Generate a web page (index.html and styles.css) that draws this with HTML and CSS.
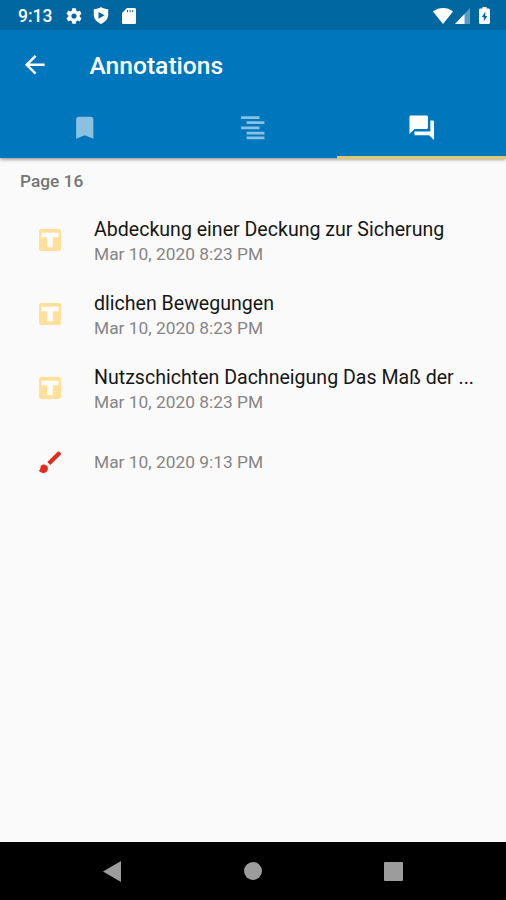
FILE: index.html
```html
<!DOCTYPE html>
<html lang="en">
<head>
<meta charset="utf-8">
<title>Annotations</title>
<link rel="stylesheet" href="styles.css">
</head>
<body>
<div class="screen">
  <header class="header">
    <div class="status">
      <span class="clock">9:13</span>
      <svg class="gear" viewBox="2 2 20 20"><path d="M19.14 12.94c.04-.3.06-.61.06-.94s-.02-.64-.07-.94l2.03-1.58c.18-.14.23-.41.12-.61l-1.92-3.32c-.12-.22-.37-.29-.59-.22l-2.39.96c-.5-.38-1.03-.7-1.62-.94l-.36-2.54c-.04-.24-.24-.41-.48-.41h-3.84c-.24 0-.43.17-.47.41l-.36 2.54c-.59.24-1.13.57-1.62.94l-2.39-.96c-.22-.08-.47 0-.59.22L2.74 8.87c-.12.21-.08.47.12.61l2.03 1.58c-.05.3-.09.63-.09.94s.02.64.07.94l-2.03 1.58c-.18.14-.23.41-.12.61l1.92 3.32c.12.22.37.29.59.22l2.39-.96c.5.38 1.03.7 1.62.94l.36 2.54c.05.24.24.41.48.41h3.84c.24 0 .44-.17.47-.41l.36-2.54c.59-.24 1.13-.56 1.62-.94l2.39.96c.22.08.47 0 .59-.22l1.92-3.32c.12-.22.07-.47-.12-.61zM12 15.200A3.200 3.200 0 1 1 12 8.800a3.200 3.200 0 0 1 0 6.400z"/></svg>
      <svg class="shield" viewBox="0 0 16 17"><path fill-rule="evenodd" d="M8 0C10 1.600 12.500 2 15.200 2.200V8c0 4-3 7-7.200 9C3.800 15 .8 12 .8 8V2.200C3.500 2 6 1.600 8 0zM5.500 4.900v6.800l6-3.400z"/></svg>
      <svg class="card" viewBox="0 0 14 16"><path fill-rule="evenodd" d="M5 0h7.400C13.300 0 14 .7 14 1.600v12.800c0 .9-.7 1.600-1.600 1.600H1.600C.7 16 0 15.300 0 14.400V5zM5 2v2.200h1V2zm2.600 0v2.200h1V2zm2.600 0v2.200h1V2z"/></svg>
      <svg class="wifi" viewBox="0 0 20 16"><path d="M10 16L0 3.400C5.500-1.100 14.500-1.100 20 3.400z"/></svg>
      <svg class="signal" viewBox="0 0 15 16"><path opacity=".35" d="M15 0v16H0z"/><path d="M9.500 5.900V16H0z"/></svg>
      <svg class="battery" viewBox="0 0 11 17"><path fill-rule="evenodd" d="M3.500 0h4v1.600h2c.8 0 1.500.6 1.500 1.400v12.500c0 .8-.7 1.500-1.500 1.500h-8C.7 17 0 16.300 0 15.500V3c0-.8.7-1.400 1.500-1.400h2zM6.300 4.800L2.800 10h2v4.200L8.300 9h-2z"/></svg>
    </div>
    <div class="toolbar">
      <svg class="icon" viewBox="0 0 24 24"><path d="M20 11H7.830l5.590-5.590L12 4l-8 8 8 8 1.410-1.410L7.830 13H20v-2z"/></svg>
      <h1 class="title">Annotations</h1>
    </div>
    <nav class="tabs">
      <div class="tab"><svg class="icon" viewBox="0 0 24 24"><path d="M17 3H7c-1.100 0-2 .9-2 2v16l7-3 7 3V5c0-1.100-.9-2-2-2z"/></svg></div>
      <div class="tab"><svg class="icon" viewBox="0 0 24 24"><path d="M2.500 2.600h15v2.200h-15zM7 6.800h14.500V9H7zM2.500 11h15v2.200h-15zM7 15.200h14.500v2.200H7zM7 19.200h14.500v2.200H7z"/></svg></div>
      <div class="tab active"><svg class="icon" viewBox="0 0 24 24"><path d="M21 6h-2v9H6v2c0 .55.45 1 1 1h11l4 4V7c0-.55-.45-1-1-1zm-4 6V3c0-.55-.45-1-1-1H3c-.55 0-1 .45-1 1v14l4-4h10c.55 0 1-.45 1-1z"/></svg></div>
    </nav>
  </header>
  <main class="list">
    <h2 class="page">Page 16</h2>
    <div class="row">
      <svg class="mark" viewBox="0 0 22 22"><rect width="22" height="22" rx="2"/><path class="letter" d="M2.500 3.800h17v4.400h-5.700v10H8.200v-10H2.500z"/></svg>
      <div class="text"><div class="name">Abdeckung einer Deckung zur Sicherung</div><div class="date">Mar 10, 2020 8:23 PM</div></div>
    </div>
    <div class="row">
      <svg class="mark" viewBox="0 0 22 22"><rect width="22" height="22" rx="2"/><path class="letter" d="M2.500 3.800h17v4.400h-5.700v10H8.200v-10H2.500z"/></svg>
      <div class="text"><div class="name">dlichen Bewegungen</div><div class="date">Mar 10, 2020 8:23 PM</div></div>
    </div>
    <div class="row">
      <svg class="mark" viewBox="0 0 22 22"><rect width="22" height="22" rx="2"/><path class="letter" d="M2.500 3.800h17v4.400h-5.700v10H8.200v-10H2.500z"/></svg>
      <div class="text"><div class="name">Nutzschichten Dachneigung Das Maß der ...</div><div class="date">Mar 10, 2020 8:23 PM</div></div>
    </div>
    <div class="row">
      <svg class="mark brush" viewBox="0 0 22 22"><path d="M4.600 13.600c-1.900 0-3.200 1.500-3.200 3.300 0 1.400-.7 2.300-1.700 2.700 1.100 1.500 2.800 2.400 4.500 2.400 2.700 0 4.700-1.900 4.700-4.500 0-2.200-1.800-3.900-4.300-3.900zM21.700 2.200L20.200.7c-.4-.4-1.100-.4-1.500 0L8.300 11l3 3L21.700 3.700c.4-.4.4-1.100 0-1.500z"/></svg>
      <div class="text single"><div class="date">Mar 10, 2020 9:13 PM</div></div>
    </div>
  </main>
  <footer class="navbar">
    <svg class="back" viewBox="0 0 18 21"><path d="M18 0v21L0 10.500z"/></svg>
    <svg class="home" viewBox="0 0 18 18"><circle cx="9" cy="9" r="9"/></svg>
    <svg class="recent" viewBox="0 0 19 19"><rect width="19" height="19" rx="1"/></svg>
  </footer>
</div>
</body>
</html>
```
FILE: styles.css
```css
* { box-sizing: border-box; }
body { margin: 0; font-family: Roboto, "Liberation Sans", sans-serif; }
svg { display: block; flex: none; overflow: visible; fill: #fff; }
h1, h2 { margin: 0; }
.screen { display: flex; flex-direction: column; height: 900px; background: #fafafa; }
.header { height: 157.500px; flex: none; background: #0077bd; box-shadow: 0 1px 4px rgba(0, 0, 0, .5); }
.status { display: flex; align-items: center; height: 30px; padding: 1px 16px 0 18px; background: #0067a1; }
.clock { width: 48px; color: #fff; font-size: 17.500px; font-weight: 500; line-height: 30px; white-space: nowrap; }
.gear { width: 16px; height: 16px; }
.shield { width: 16px; height: 17px; margin-left: 11px; }
.card { width: 14px; height: 16px; margin-left: 13px; }
.wifi { width: 20px; height: 16px; margin-left: auto; }
.signal { width: 15px; height: 16px; margin-left: 2px; }
.battery { width: 11px; height: 17px; margin-left: 9px; }
.toolbar { display: flex; align-items: center; height: 69px; padding: 0 20px; }
.icon { width: 29.500px; height: 29.500px; }
.title { margin-left: 40px; padding-top: 2px; color: #fff; font-size: 24.600px; font-weight: 500; line-height: 30px; }
.tabs { display: flex; height: 60px; }
.tab { flex: 1; display: flex; align-items: center; justify-content: center; padding-bottom: 3px; }
.tab:not(.active) .icon { opacity: .54; }
.tab.active { padding-bottom: 0; border-bottom: 3.500px solid #dfc66f; }
.list { flex: 1; padding-top: 8px; }
.page { height: 37px; padding: 3px 20px 0; color: #757575; font-size: 17.300px; font-weight: 500; line-height: 24px; }
.row { display: flex; align-items: center; height: 74px; padding: 0 20px 0 38.500px; }
.mark { width: 22px; height: 22px; margin-right: 33.500px; fill: #ffe09a; }
.letter { fill: #fff; }
.brush { fill: #e52a20; }
.text { min-width: 0; padding-top: 3px; white-space: nowrap; }
.text.single { padding-top: 0; }
.name { height: 25px; color: #161616; font-size: 19.570px; line-height: 26px; }
.date { height: 24px; color: #858585; font-size: 17.350px; line-height: 24px; }
.navbar { display: flex; align-items: center; justify-content: space-between; height: 58px; padding: 0 103px; background: #000; }
.navbar svg { fill: #9c9c9c; }
.back { width: 18px; height: 21px; }
.home { width: 18px; height: 18px; }
.recent { width: 19px; height: 19px; }
```
